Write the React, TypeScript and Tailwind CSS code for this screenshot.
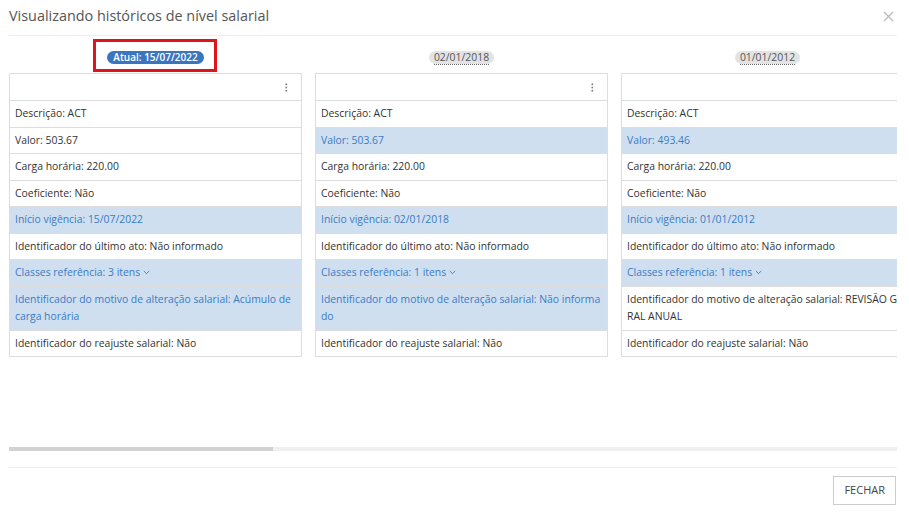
import React from "react";

type Row = { text: string; hl?: boolean; chevron?: boolean };

const columns: { badge: string; current?: boolean; rows: Row[] }[] = [
  {
    badge: "Atual: 15/07/2022",
    current: true,
    rows: [
      { text: "Descrição: ACT" },
      { text: "Valor: 503.67" },
      { text: "Carga horária: 220.00" },
      { text: "Coeficiente: Não" },
      { text: "Início vigência: 15/07/2022", hl: true },
      { text: "Identificador do último ato: Não informado" },
      { text: "Classes referência: 3 itens", hl: true, chevron: true },
      { text: "Identificador do motivo de alteração salarial: Acúmulo de carga horária", hl: true },
      { text: "Identificador do reajuste salarial: Não" },
    ],
  },
  {
    badge: "02/01/2018",
    rows: [
      { text: "Descrição: ACT" },
      { text: "Valor: 503.67", hl: true },
      { text: "Carga horária: 220.00" },
      { text: "Coeficiente: Não" },
      { text: "Início vigência: 02/01/2018", hl: true },
      { text: "Identificador do último ato: Não informado" },
      { text: "Classes referência: 1 itens", hl: true, chevron: true },
      { text: "Identificador do motivo de alteração salarial: Não informado", hl: true },
      { text: "Identificador do reajuste salarial: Não" },
    ],
  },
  {
    badge: "01/01/2012",
    rows: [
      { text: "Descrição: ACT" },
      { text: "Valor: 493.46", hl: true },
      { text: "Carga horária: 220.00" },
      { text: "Coeficiente: Não" },
      { text: "Início vigência: 01/01/2012", hl: true },
      { text: "Identificador do último ato: Não informado" },
      { text: "Classes referência: 1 itens", hl: true, chevron: true },
      { text: "Identificador do motivo de alteração salarial: REVISÃO GERAL ANUAL" },
      { text: "Identificador do reajuste salarial: Não" },
    ],
  },
];

function Chevron() {
  return (
    <svg width="7" height="5" viewBox="0 0 7 5" className="inline-block ml-[3px] mb-[1px]">
      <path d="M0.8 1 L3.5 3.6 L6.2 1" fill="none" stroke="currentColor" strokeWidth="0.9" />
    </svg>
  );
}

function Kebab() {
  return (
    <svg width="3" height="9" viewBox="0 0 3 9">
      <rect x="0.5" y="0.5" width="1.6" height="1.6" fill="#777" />
      <rect x="0.5" y="3.7" width="1.6" height="1.6" fill="#777" />
      <rect x="0.5" y="6.9" width="1.6" height="1.6" fill="#777" />
    </svg>
  );
}

export default function App() {
  return (
    <div className="w-[909px] h-[512px] bg-white font-['Open_Sans',sans-serif] pl-[9px] pr-[12px] flex flex-col overflow-hidden">
      <div className="h-[36px] flex items-center justify-between border-b border-[#eeeeee] shrink-0">
        <div className="text-[14.4px] text-[#555555] leading-none pb-[2px]">Visualizando históricos de nível salarial</div>
        <svg width="11" height="11" viewBox="0 0 11 11" className="mr-[3px] mb-[2px]">
          <path d="M1 1 L10 10 M10 1 L1 10" stroke="#bbbbbb" strokeWidth="1.4" />
        </svg>
      </div>

      <div className="h-[431px] shrink-0 flex flex-col">
        <div className="flex gap-[13px] overflow-hidden">
          {columns.map((c, i) => (
            <div key={i} className="w-[293px] shrink-0 flex flex-col">
              <div className="h-[37px] flex justify-center pt-[15px]">
                {c.current ? (
                  <div className="relative h-[13px]">
                    <div className="h-[13px] px-[6px] rounded-full bg-[#3a76c0] text-white text-[10px] font-semibold leading-[13px] whitespace-nowrap">
                      {c.badge}
                    </div>
                    <div className="absolute left-[-14px] right-[-13px] top-[-12px] bottom-[-8px] border-[3px] border-[#e0141b]"></div>
                  </div>
                ) : (
                  <div className="h-[13px] px-[5px] rounded-full bg-[#e3e3e3] text-[#555555] text-[10.4px] leading-[13px] whitespace-nowrap">
                    <span className="border-b border-dotted border-[#666666]">{c.badge}</span>
                  </div>
                )}
              </div>
              <div className="border border-[#dddddd] text-[10.4px]">
                <div className="h-[26px] flex items-center justify-end pr-[13px] bg-white">
                  <Kebab />
                </div>
                {c.rows.map((r, j) => (
                  <div
                    key={j}
                    className={
                      "border-t border-[#dddddd] px-[5px] py-[4px] leading-[17.5px] break-all " +
                      (r.hl ? "bg-[#cfdff0] text-[#3b7bc4]" : "bg-white text-[#333333]")
                    }
                  >
                    {r.text}
                    {r.chevron ? <Chevron /> : null}
                  </div>
                ))}
              </div>
            </div>
          ))}
        </div>
        <div className="flex-1"></div>
        <div className="h-[4px] bg-[#f0f0f0] mb-[16px] flex">
          <div className="w-[264px] h-full bg-[#d2d2d2]"></div>
        </div>
      </div>

      <div className="border-t border-[#eeeeee] flex justify-end pt-[8px]">
        <button className="h-[29px] px-[10px] border border-[#cccccc] bg-white text-[11px] text-[#444444] mr-[1px]">
          FECHAR
        </button>
      </div>
    </div>
  );
}
